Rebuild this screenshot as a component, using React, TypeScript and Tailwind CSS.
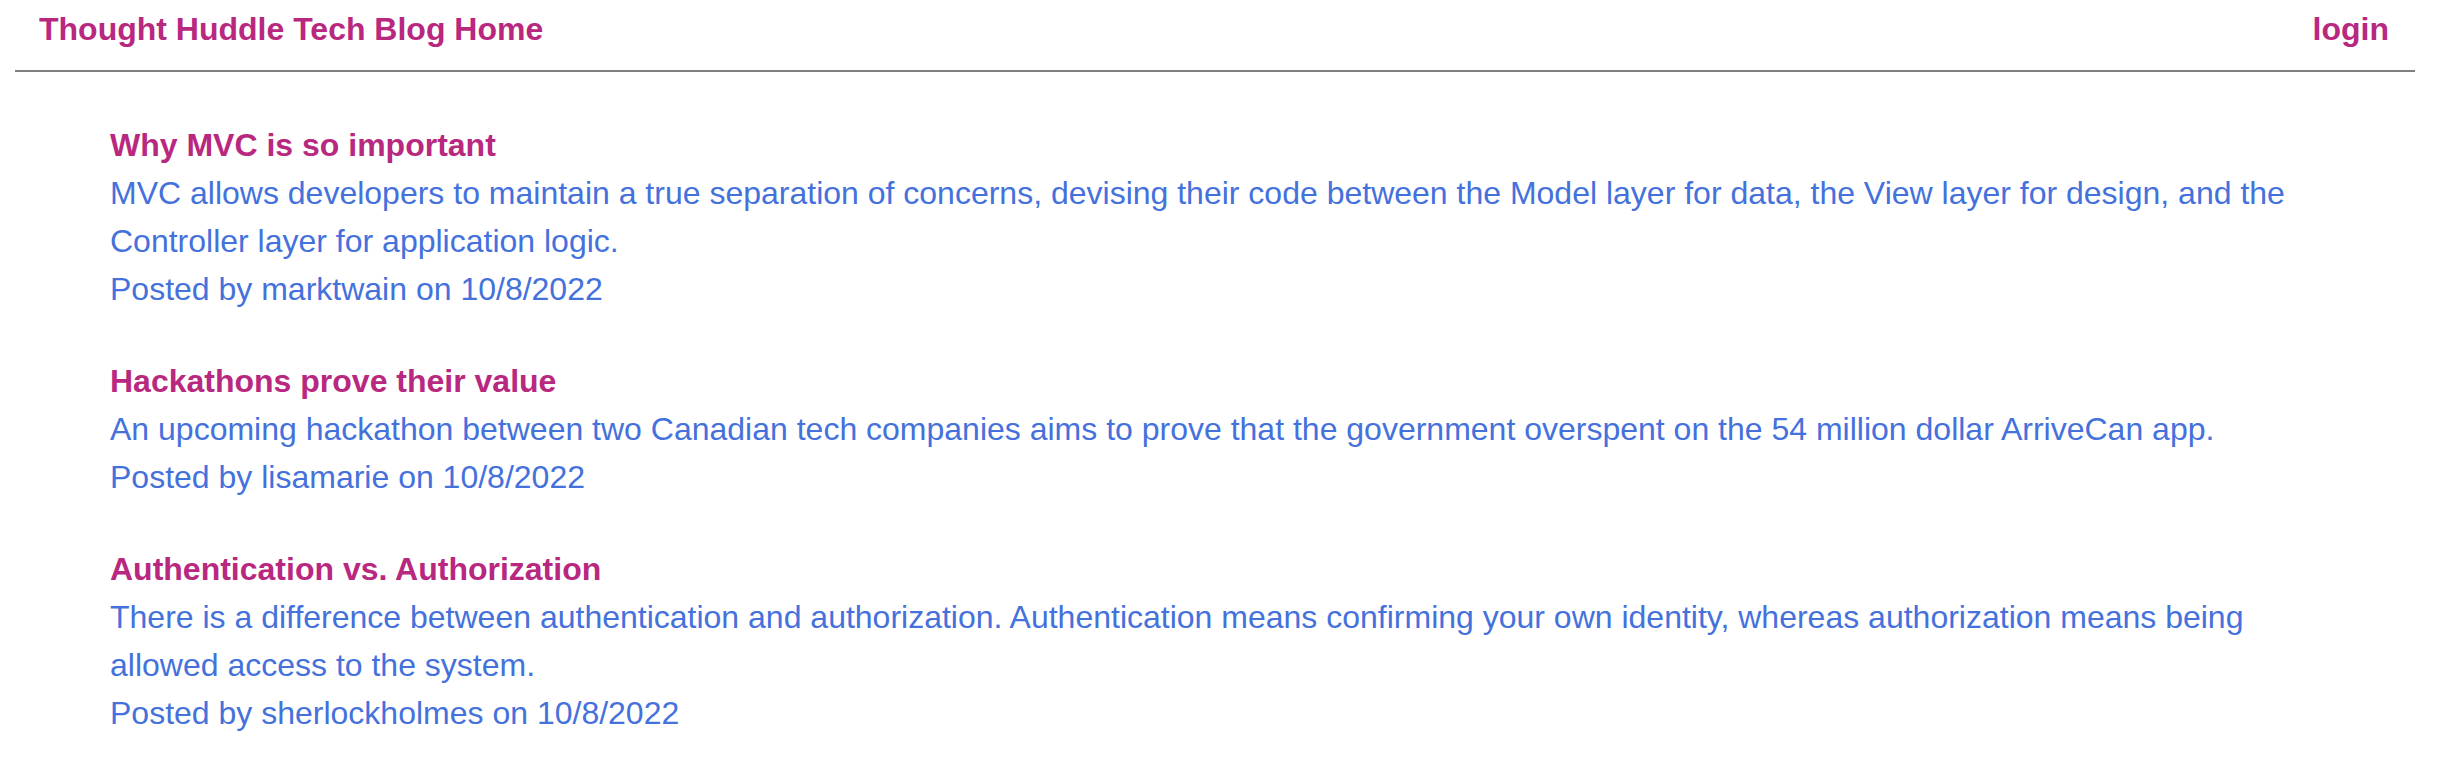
import React from 'react';

type Post = {
  title: string;
  body: string;
  author: string;
  date: string;
};

const posts: Post[] = [
  {
    title: 'Why MVC is so important',
    body: 'MVC allows developers to maintain a true separation of concerns, devising their code between the Model layer for data, the View layer for design, and the Controller layer for application logic.',
    author: 'marktwain',
    date: '10/8/2022',
  },
  {
    title: 'Hackathons prove their value',
    body: 'An upcoming hackathon between two Canadian tech companies aims to prove that the government overspent on the 54 million dollar ArriveCan app.',
    author: 'lisamarie',
    date: '10/8/2022',
  },
  {
    title: 'Authentication vs. Authorization',
    body: 'There is a difference between authentication and authorization. Authentication means confirming your own identity, whereas authorization means being allowed access to the system.',
    author: 'sherlockholmes',
    date: '10/8/2022',
  },
];

const App = () => {
  return (
    <div className="min-h-screen bg-white font-['Liberation_Sans',Arial,sans-serif] text-[32px] leading-[48px]">
      <header className="pt-[5px]">
        <nav className="flex items-center justify-between pl-[39px] pr-[55px]">
          <a href="#" className="font-bold text-[#b8287f]">
            Thought Huddle Tech Blog Home
          </a>
          <a href="#" className="font-bold text-[#b8287f]">
            login
          </a>
        </nav>
        <div className="mt-[17px] ml-[15px] mr-[29px] h-[2px] bg-[#808080]"></div>
      </header>

      <main className="pt-[49px] pl-[110px] pr-[110px]">
        <div className="flex flex-col gap-[44px]">
          {posts.map((post) => (
            <article key={post.title}>
              <h2 className="font-bold text-[#b8287f]">{post.title}</h2>
              <p className="text-[#4571dc]">{post.body}</p>
              <p className="text-[#4571dc]">
                Posted by {post.author} on {post.date}
              </p>
            </article>
          ))}
        </div>
      </main>
    </div>
  );
};

export default App;
